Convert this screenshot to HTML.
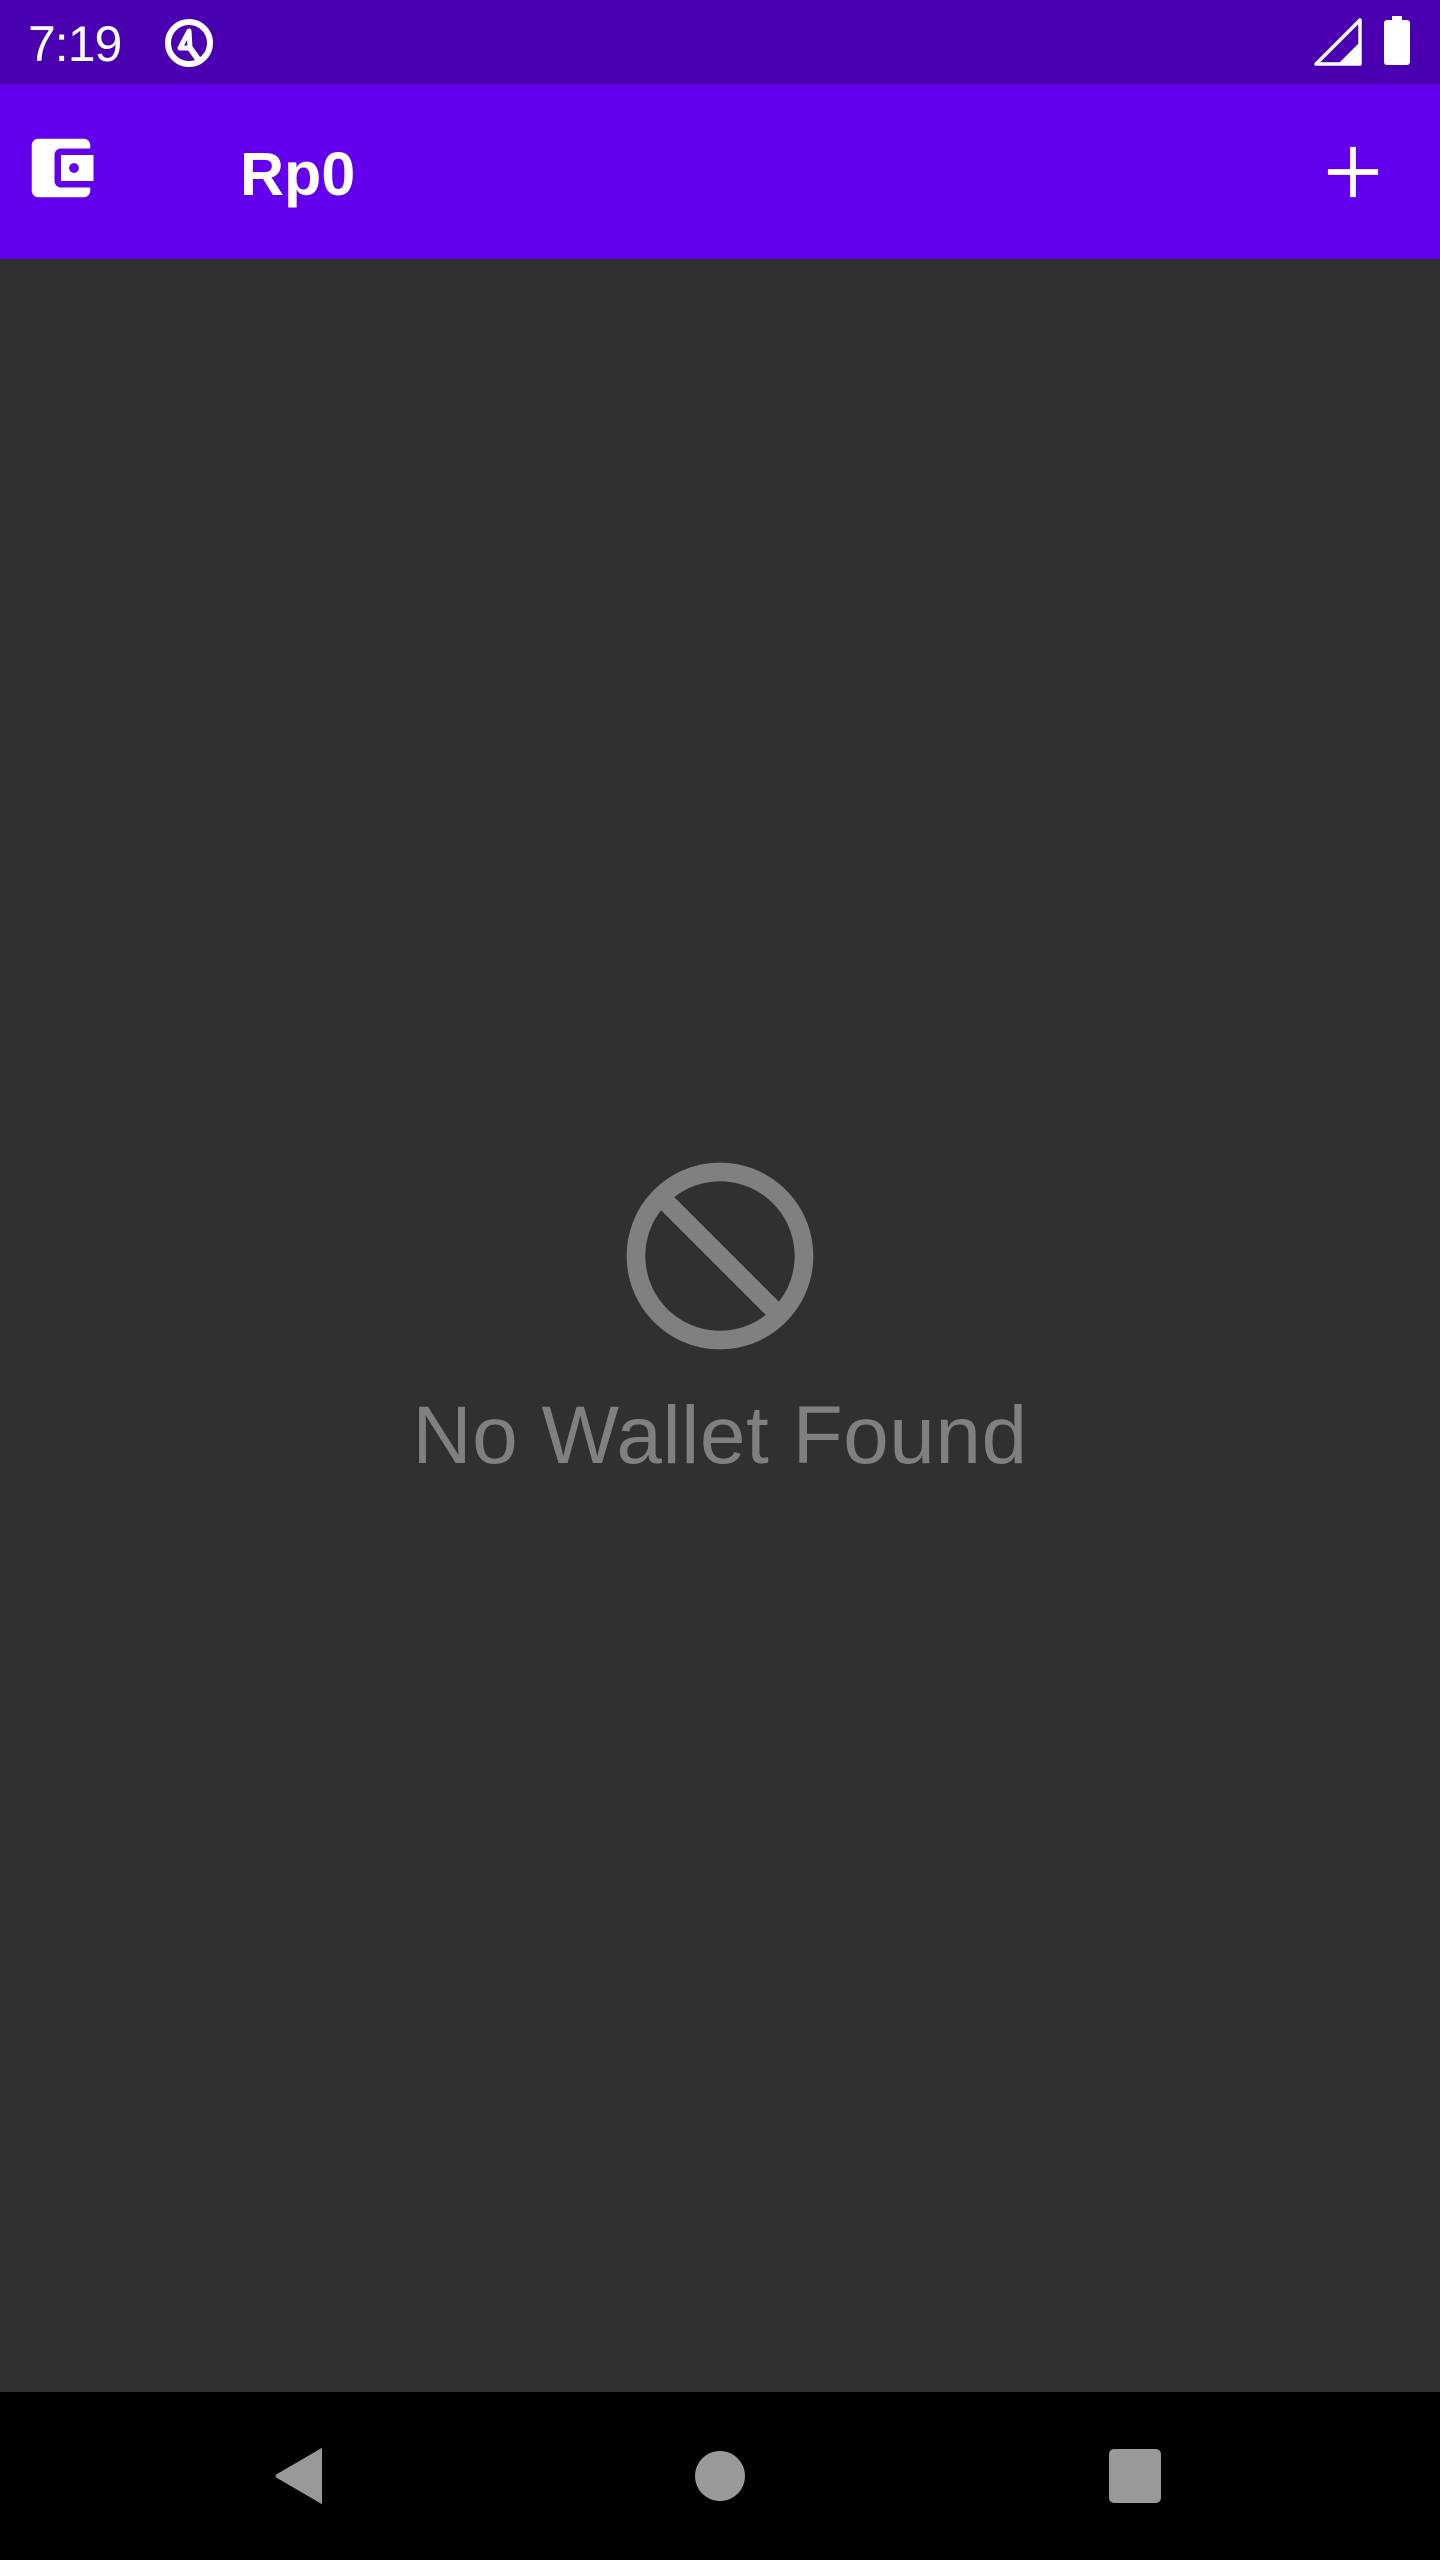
<!DOCTYPE html>
<html><head><meta charset="utf-8"><style>
html,body{margin:0;padding:0;width:1440px;height:2560px;overflow:hidden;background:#303030;font-family:"Liberation Sans",sans-serif}
.sb{position:absolute;left:0;top:0;width:1440px;height:84px;background:#4a00b0}
.ab{position:absolute;left:0;top:84px;width:1440px;height:175px;background:#6200ee}
.nav{position:absolute;left:0;top:2392px;width:1440px;height:168px;background:#000}
svg{position:absolute}
</style></head><body>
<div class="sb"></div>
<div style="position:absolute;left:28px;top:14px;color:#fff;font-size:50px;line-height:60px;letter-spacing:-1px">7:19</div>
<svg style="left:160px;top:14px" width="58" height="58" viewBox="0 0 58 58">
<circle cx="29" cy="29" r="21" fill="none" stroke="#fff" stroke-width="6"/>
<path d="M29 17 L20 34 L30 34 Z" fill="none" stroke="#fff" stroke-width="5" stroke-linejoin="round"/>
<path d="M30 34 L40 48" stroke="#fff" stroke-width="6"/>
</svg>
<svg style="left:1314px;top:18px" width="50" height="48" viewBox="0 0 50 48">
<path d="M2 46 L46 2 L46 46 Z" fill="none" stroke="#fff" stroke-width="3.5" stroke-linejoin="round"/>
<path d="M24 46 L46 24 L46 46 Z" fill="#fff"/>
</svg>
<svg style="left:1382px;top:16px" width="32" height="50" viewBox="0 0 32 50">
<rect x="10" y="0" width="10" height="6" fill="#fff"/>
<rect x="2" y="4" width="26" height="45" rx="3" fill="#fff"/>
</svg>
<div class="ab"></div>
<svg style="left:22px;top:129px" width="78" height="78" viewBox="0 0 24 24"><path fill="#fff" d="M21 18v1c0 1.1-.9 2-2 2H5c-1.11 0-2-.9-2-2V5c0-1.1.89-2 2-2h14c1.1 0 2 .9 2 2v1h-9c-1.11 0-2 .9-2 2v8c0 1.1.89 2 2 2h9zm-9-2h10V8H12v8zm4-2.5c-.83 0-1.5-.67-1.5-1.5s.67-1.5 1.5-1.5 1.5.67 1.5 1.5-.67 1.5-1.5 1.5z"/></svg>
<div style="position:absolute;left:240px;top:136px;color:#fff;font-size:61px;font-weight:bold;line-height:76px">Rp0</div>
<svg style="left:1310px;top:129px" width="86" height="86" viewBox="0 0 24 24"><path fill="#fff" d="M19 12.8h-6.2v6.2h-1.6v-6.2H5v-1.6h6.2V5h1.6v6.2H19z"/></svg>
<svg style="left:608px;top:1144px;transform:scaleX(-1)" width="224" height="224" viewBox="0 0 24 24"><path fill="#808080" d="M12 2C6.48 2 2 6.480 2 12s4.48 10 10 10 10-4.48 10-10S17.52 2 12 2zM4 12c0-4.42 3.58-8 8-8 1.85 0 3.55.63 4.9 1.69L5.69 16.9C4.63 15.55 4 13.85 4 12zm8 8c-1.85 0-3.55-.63-4.9-1.69L18.31 7.1C19.37 8.45 20 10.15 20 12c0 4.42-3.58 8-8 8z"/></svg>
<div style="position:absolute;left:0;width:1440px;top:1386px;text-align:center;color:#808080;font-size:82px;line-height:100px;letter-spacing:0.5px">No Wallet Found</div>
<div class="nav"></div>
<svg style="left:272px;top:2446px" width="54" height="60" viewBox="0 0 54 60"><path d="M50 3 L50 57 Q50 59 48 57 L5 32 Q2 30 5 28 L48 3 Q50 1 50 3Z" fill="#999"/></svg>
<div style="position:absolute;left:695px;top:2451px;width:50px;height:50px;border-radius:50%;background:#999"></div>
<div style="position:absolute;left:1109px;top:2449px;width:52px;height:54px;border-radius:5px;background:#999"></div>
</body></html>
